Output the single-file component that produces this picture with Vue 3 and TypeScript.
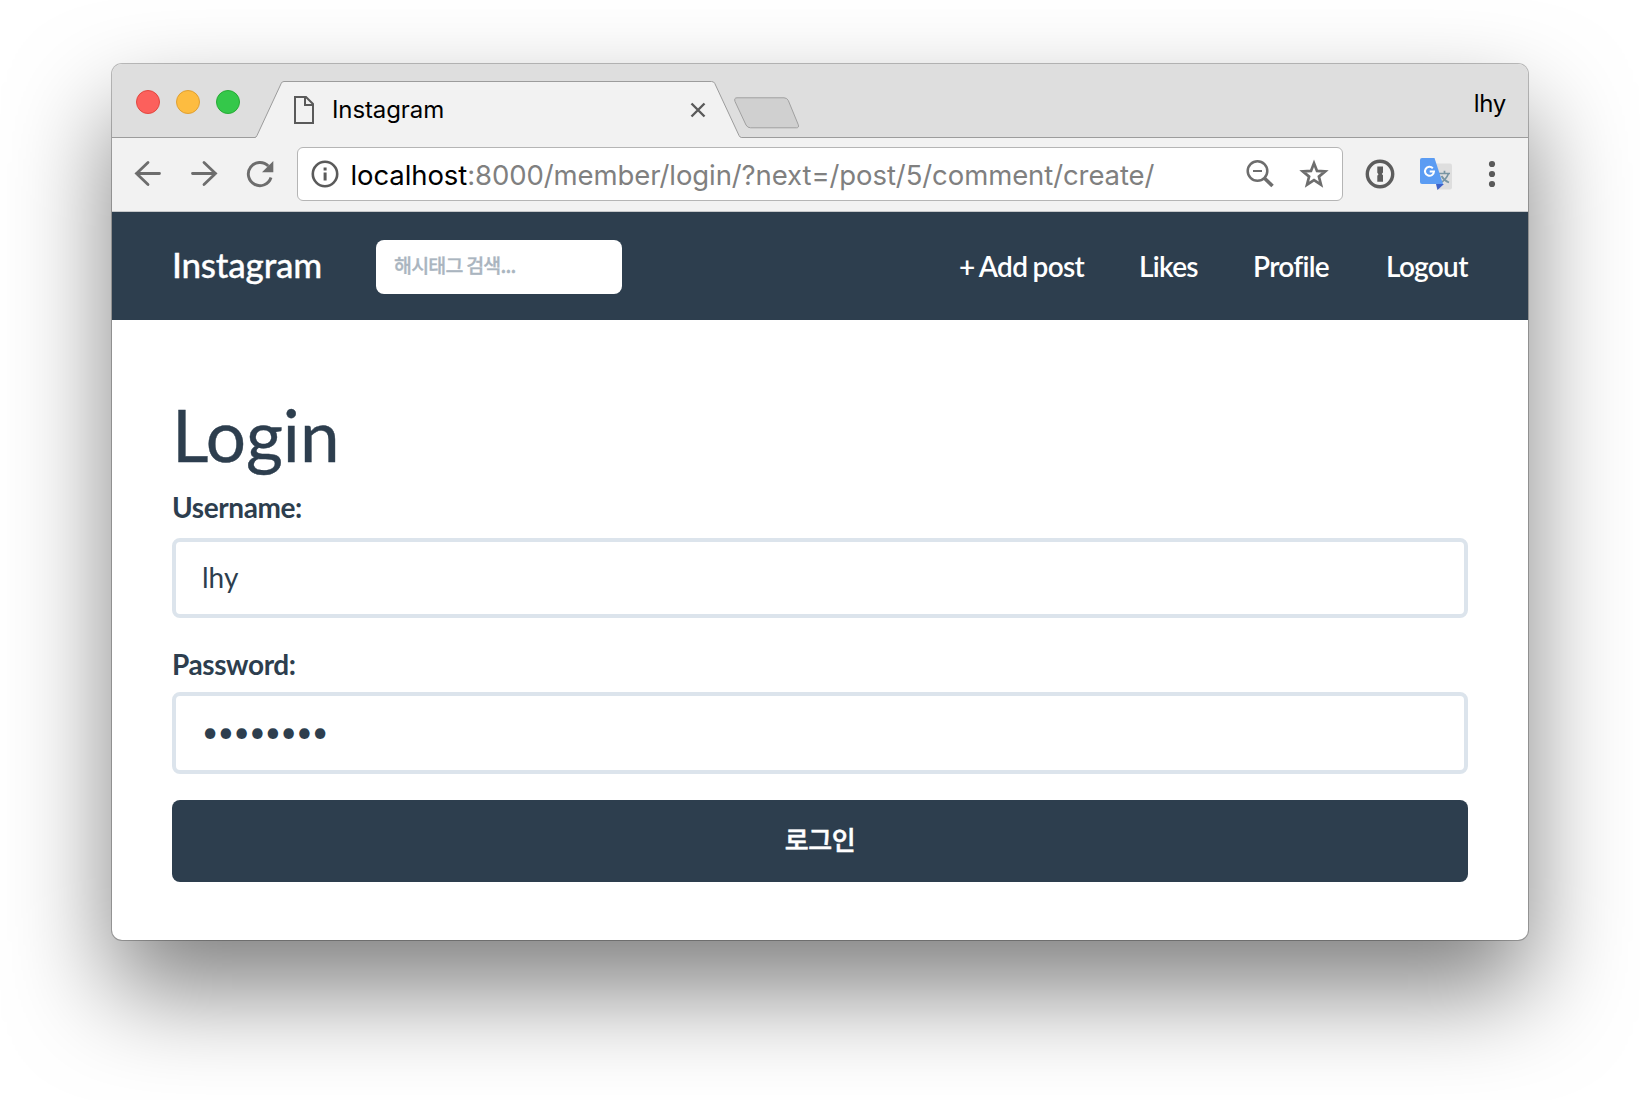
<script setup lang="ts">
import { ref } from 'vue'

interface NavLink {
  label: string
  width: number
}

const lights = ['red', 'yellow', 'green']
const links: NavLink[] = [
  { label: '+ Add post', width: 125 },
  { label: 'Likes', width: 59 },
  { label: 'Profile', width: 78 },
  { label: 'Logout', width: 82 },
]
const username = ref('lhy')
const mask = '•'.repeat(8)
</script>

<template>
  <div class="desktop">
    <div class="window">
      <div class="tabstrip">
        <div class="lights">
          <i v-for="c in lights" :key="c" :class="['light', c]"></i>
        </div>
        <div class="tab">
          <svg class="tab-shape" width="486" height="58" viewBox="0 0 486 58">
            <path d="M-1 56.500 Q0 56.500 1 54.500 L25.300 2.200 Q26 .5 28 .5 H455.500 Q458 .5 458.800 2.500 L483 54.500 Q484 56.500 485.500 56.500 V58 H-1Z" fill="#f2f2f2" />
            <path d="M-1 56.500 Q0 56.500 1 54.500 L25.300 2.200 Q26 .5 28 .5 H455.500 Q458 .5 458.800 2.500 L483 54.500 Q484 56.500 485.500 56.500" fill="none" stroke="#9c9c9c" />
          </svg>
          <svg class="page-icon" width="20" height="28" viewBox="0 0 20 28" fill="none" stroke="#5a5a5a" stroke-width="2">
            <path d="M1 1H12L19 8V27H1Z" />
            <path d="M11 1V9H19" />
          </svg>
          <span class="tab-title">Instagram</span>
          <svg class="close" width="14" height="14" viewBox="0 0 14 14" stroke="#5a5a5a" stroke-width="2.400">
            <path d="M.5 .5 13.500 13.500M13.500 .5 .5 13.500" />
          </svg>
        </div>
        <svg class="new-tab" width="66" height="32" viewBox="0 0 66 32">
          <path d="M3 .8H50Q53 .8 54.300 3.500L64.200 27.500Q65.400 30.800 62.500 30.800H16.500Q13.500 30.800 12 28L1 4.500Q-.2 .8 3 .8Z" fill="#d0d0d0" stroke="#a0a0a0" />
        </svg>
        <span class="profile-name">lhy</span>
      </div>

      <div class="toolbar">
        <svg class="back" width="28" height="28" viewBox="0 0 28 28" fill="none" stroke="#6d6d6d" stroke-width="2.800" stroke-linecap="round">
          <path d="M25.500 13.500H2.500M14 2.500 2.500 13.500 14 24.500" />
        </svg>
        <svg class="forward" width="28" height="28" viewBox="0 0 28 28" fill="none" stroke="#6d6d6d" stroke-width="2.800" stroke-linecap="round">
          <path d="M2.500 13.500H25.500M14 2.500 25.500 13.500 14 24.500" />
        </svg>
        <svg class="reload" width="28" height="28" viewBox="0 0 28 28">
          <path d="M25 17.500A11.600 11.600 0 1 1 22.300 6" fill="none" stroke="#6d6d6d" stroke-width="2.900" />
          <path d="M27.300 1V12.300H16Z" fill="#6d6d6d" />
        </svg>
        <div class="omnibox">
          <svg class="info" width="28" height="28" viewBox="0 0 28 28">
            <circle cx="14" cy="14" r="12.200" fill="none" stroke="#5a5a5a" stroke-width="2.600" />
            <path d="M12.600 7.500h3v3h-3zM12.600 12.600h3v8h-3z" fill="#5a5a5a" />
          </svg>
          <span class="url"><b>localhost</b>:8000/member/login/?next=/post/5/comment/create/</span>
          <svg class="zoom" width="28" height="28" viewBox="0 0 28 28" fill="none" stroke="#6d6d6d">
            <circle cx="11.500" cy="11" r="9.800" stroke-width="2.500" />
            <path d="M7 11H16" stroke-width="2" />
            <path d="M18.500 18.300 26.500 26" stroke-width="3.600" />
          </svg>
          <svg class="star" width="30" height="28" viewBox="0 0 30 28">
            <path d="M15 3.300 18 10.900 26.200 11.400 19.900 16.600 22 24.700 15 20.200 8 24.700 10.100 16.600 3.800 11.400 12 10.900Z" fill="none" stroke="#6d6d6d" stroke-width="2.700" />
          </svg>
        </div>
        <svg class="onepass" width="30" height="30" viewBox="0 0 30 30">
          <circle cx="15" cy="15" r="12.700" fill="#f4f4f4" stroke="#5d5d5d" stroke-width="3.400" />
          <path d="M12.300 7.500H18V13.500L16.800 15 18 16.200V22.700H12.300V16.800L13.500 15.300 12.300 13.800Z" fill="#5d5d5d" />
        </svg>
        <svg class="translate" width="32" height="32" viewBox="0 0 32 32">
          <path d="M13 5.500H30Q32 5.500 32 7.500V29.500Q32 31.500 30 31.500H17Z" fill="#dedede" />
          <path d="M19 15.500H30M24.500 12.800V15.500M28.300 16Q26 22 20 25M21.500 18Q24 22.500 29 24.500" stroke="#7895a3" stroke-width="1.700" fill="none" />
          <path d="M16 26H24L17.500 32Z" fill="#3f62c8" />
          <path d="M2 0H14.500L23 26H2Q0 26 0 24V2Q0 0 2 0Z" fill="#5b9cf3" />
          <path d="M12.800 10.200A4.500 4.500 0 1 0 14 13.500H9.700" stroke="#fff" stroke-width="2" fill="none" />
        </svg>
        <svg class="menu" width="8" height="28" viewBox="0 0 8 28" fill="#5a5a5a">
          <circle cx="4" cy="4" r="3.100" /><circle cx="4" cy="14" r="3.100" /><circle cx="4" cy="24" r="3.100" />
        </svg>
      </div>

      <nav class="navbar">
        <a class="brand">Instagram</a>
        <div class="search">해시태그 검색...</div>
        <div class="links">
          <a v-for="l in links" :key="l.label" :style="{ width: l.width + 'px' }">{{ l.label }}</a>
        </div>
      </nav>

      <main class="content">
        <h1>Login</h1>
        <label class="user-label">Username:</label>
        <div class="field user">{{ username }}</div>
        <label class="pass-label">Password:</label>
        <div class="field pass"><span class="mask">{{ mask }}</span></div>
        <button type="button">로그인</button>
      </main>
    </div>
  </div>
</template>

<style>
body {
  margin: 0;
  background: #fff;
  overflow: hidden;
}
</style>

<style scoped>
.desktop {
  box-sizing: border-box;
  width: 1640px;
  height: 1100px;
  padding: 64px 112px;
  overflow: hidden;
  background: #fff;
}
svg {
  display: block;
  flex: none;
  overflow: visible;
}
.window {
  width: 1416px;
  height: 876px;
  border-radius: 10px;
  background: #fff;
  box-shadow: 0 0 0 1px rgba(0, 0, 0, 0.25), 0 50px 100px rgba(0, 0, 0, 0.5);
  font-family: Lato, "Noto Sans CJK KR", sans-serif;
  color: #2d3e4e;
}
.tabstrip {
  box-sizing: border-box;
  display: flex;
  height: 74px;
  background: #dedede;
  border-bottom: 1px solid #9c9c9c;
  border-radius: 10px 10px 0 0;
  font-family: Inter, sans-serif;
  color: #000;
}
.lights {
  display: flex;
  gap: 16px;
  padding: 26px 0 0 24px;
  width: 120px;
}
.light {
  box-sizing: border-box;
  width: 24px;
  height: 24px;
  border-radius: 50%;
}
.red { background: #fc605c; border: 1px solid #e2473f; }
.yellow { background: #fdbc40; border: 1px solid #e0a032; }
.green { background: #34c84a; border: 1px solid #27ab35; }
.tab {
  position: relative;
  display: flex;
  align-items: flex-start;
  width: 486px;
  height: 58px;
  margin-top: 17px;
}
.tab-shape {
  position: absolute;
  left: 0;
  top: 0;
}
.page-icon { position: relative; margin: 15px 0 0 38px; }
.tab-title {
  position: relative;
  width: 359px;
  margin: 14px 0 0 18px;
  font-size: 24px;
  line-height: 30px;
  letter-spacing: -0.1px;
}
.close { position: relative; margin-top: 22px; }
.new-tab { margin: 33px 0 0 -8px; }
.profile-name {
  margin: 25px 22px 0 auto;
  font-size: 24px;
  line-height: 30px;
  letter-spacing: -0.3px;
}
.toolbar {
  box-sizing: border-box;
  display: flex;
  align-items: flex-start;
  height: 74px;
  background: #f2f2f2;
  border-bottom: 1px solid #c6c8ca;
}
.back { margin: 22px 0 0 22px; }
.forward { margin: 22px 0 0 28px; }
.reload { margin: 22px 0 0 28px; }
.omnibox {
  box-sizing: border-box;
  display: flex;
  align-items: flex-start;
  width: 1046px;
  height: 54px;
  margin: 9px 0 0 23px;
  background: #fff;
  border: 1px solid #b5b5b5;
  border-radius: 6px;
}
.info { margin: 12px 0 0 12.5px; }
.url {
  width: 886px;
  margin: 10px 0 0 12px;
  font: 27.5px/34px Inter, sans-serif;
  letter-spacing: -0.09px;
  color: #808080;
  white-space: nowrap;
}
.url b {
  font-weight: 400;
  color: #000;
}
.zoom { margin: 12px 0 0 9.5px; }
.star { margin: 12px 0 0 25px; }
.onepass { margin: 21px 0 0 22px; }
.translate { margin: 20px 0 0 25px; }
.menu { margin: 22px 0 0 36px; }
.navbar {
  box-sizing: border-box;
  display: flex;
  align-items: center;
  height: 108px;
  padding: 0 60px;
  background: #2d3e4e;
  color: #fff;
}
.brand {
  width: 204px;
  padding-bottom: 4px;
  font-size: 35px;
  font-weight: 500;
  line-height: 44px;
  letter-spacing: -0.2px;
  -webkit-text-stroke: 0.3px #fff;
}
.search {
  box-sizing: border-box;
  width: 246px;
  height: 54px;
  margin-top: 2px;
  padding-left: 18px;
  border-radius: 8px;
  background: #fff;
  color: #aab5bf;
  font: 500 19.500px/50px "Noto Sans CJK KR", sans-serif;
  letter-spacing: -0.8px;
  -webkit-text-stroke: 0.3px #aab5bf;
  white-space: nowrap;
}
.links {
  display: flex;
  gap: 55px;
  margin-left: auto;
  font-size: 28px;
  font-weight: 600;
  line-height: 36px;
  letter-spacing: -0.7px;
}
.links a {
  padding-bottom: 1px;
  white-space: nowrap;
  word-spacing: -1px;
}
.content {
  display: flex;
  flex-direction: column;
  padding: 77px 60px 0;
}
h1 {
  height: 79px;
  margin: 0;
  font-size: 71px;
  font-weight: 400;
  line-height: 76px;
  -webkit-text-stroke: 0.4px #2d3e4e;
}
label {
  font-size: 28px;
  font-weight: 700;
  line-height: 36px;
  letter-spacing: -0.4px;
}
.user-label { margin-top: 13px; }
.pass-label { margin-top: 28px; }
.field {
  box-sizing: border-box;
  display: flex;
  align-items: center;
  border: 4px solid #dce4ec;
  border-radius: 8px;
  padding: 0 0 2px 26px;
  font-size: 28px;
}
.user { height: 80px; margin-top: 13px; }
.pass { height: 82px; margin-top: 10px; padding-bottom: 4px; }
.mask { letter-spacing: -0.53px; }
button {
  height: 82px;
  margin-top: 26px;
  padding: 0 0 6px;
  border: 0;
  border-radius: 8px;
  background: #2d3e4e;
  color: #fff;
  font: 500 26px "Noto Sans CJK KR", sans-serif;
  letter-spacing: -0.5px;
  -webkit-text-stroke: 0.5px #fff;
}
</style>
